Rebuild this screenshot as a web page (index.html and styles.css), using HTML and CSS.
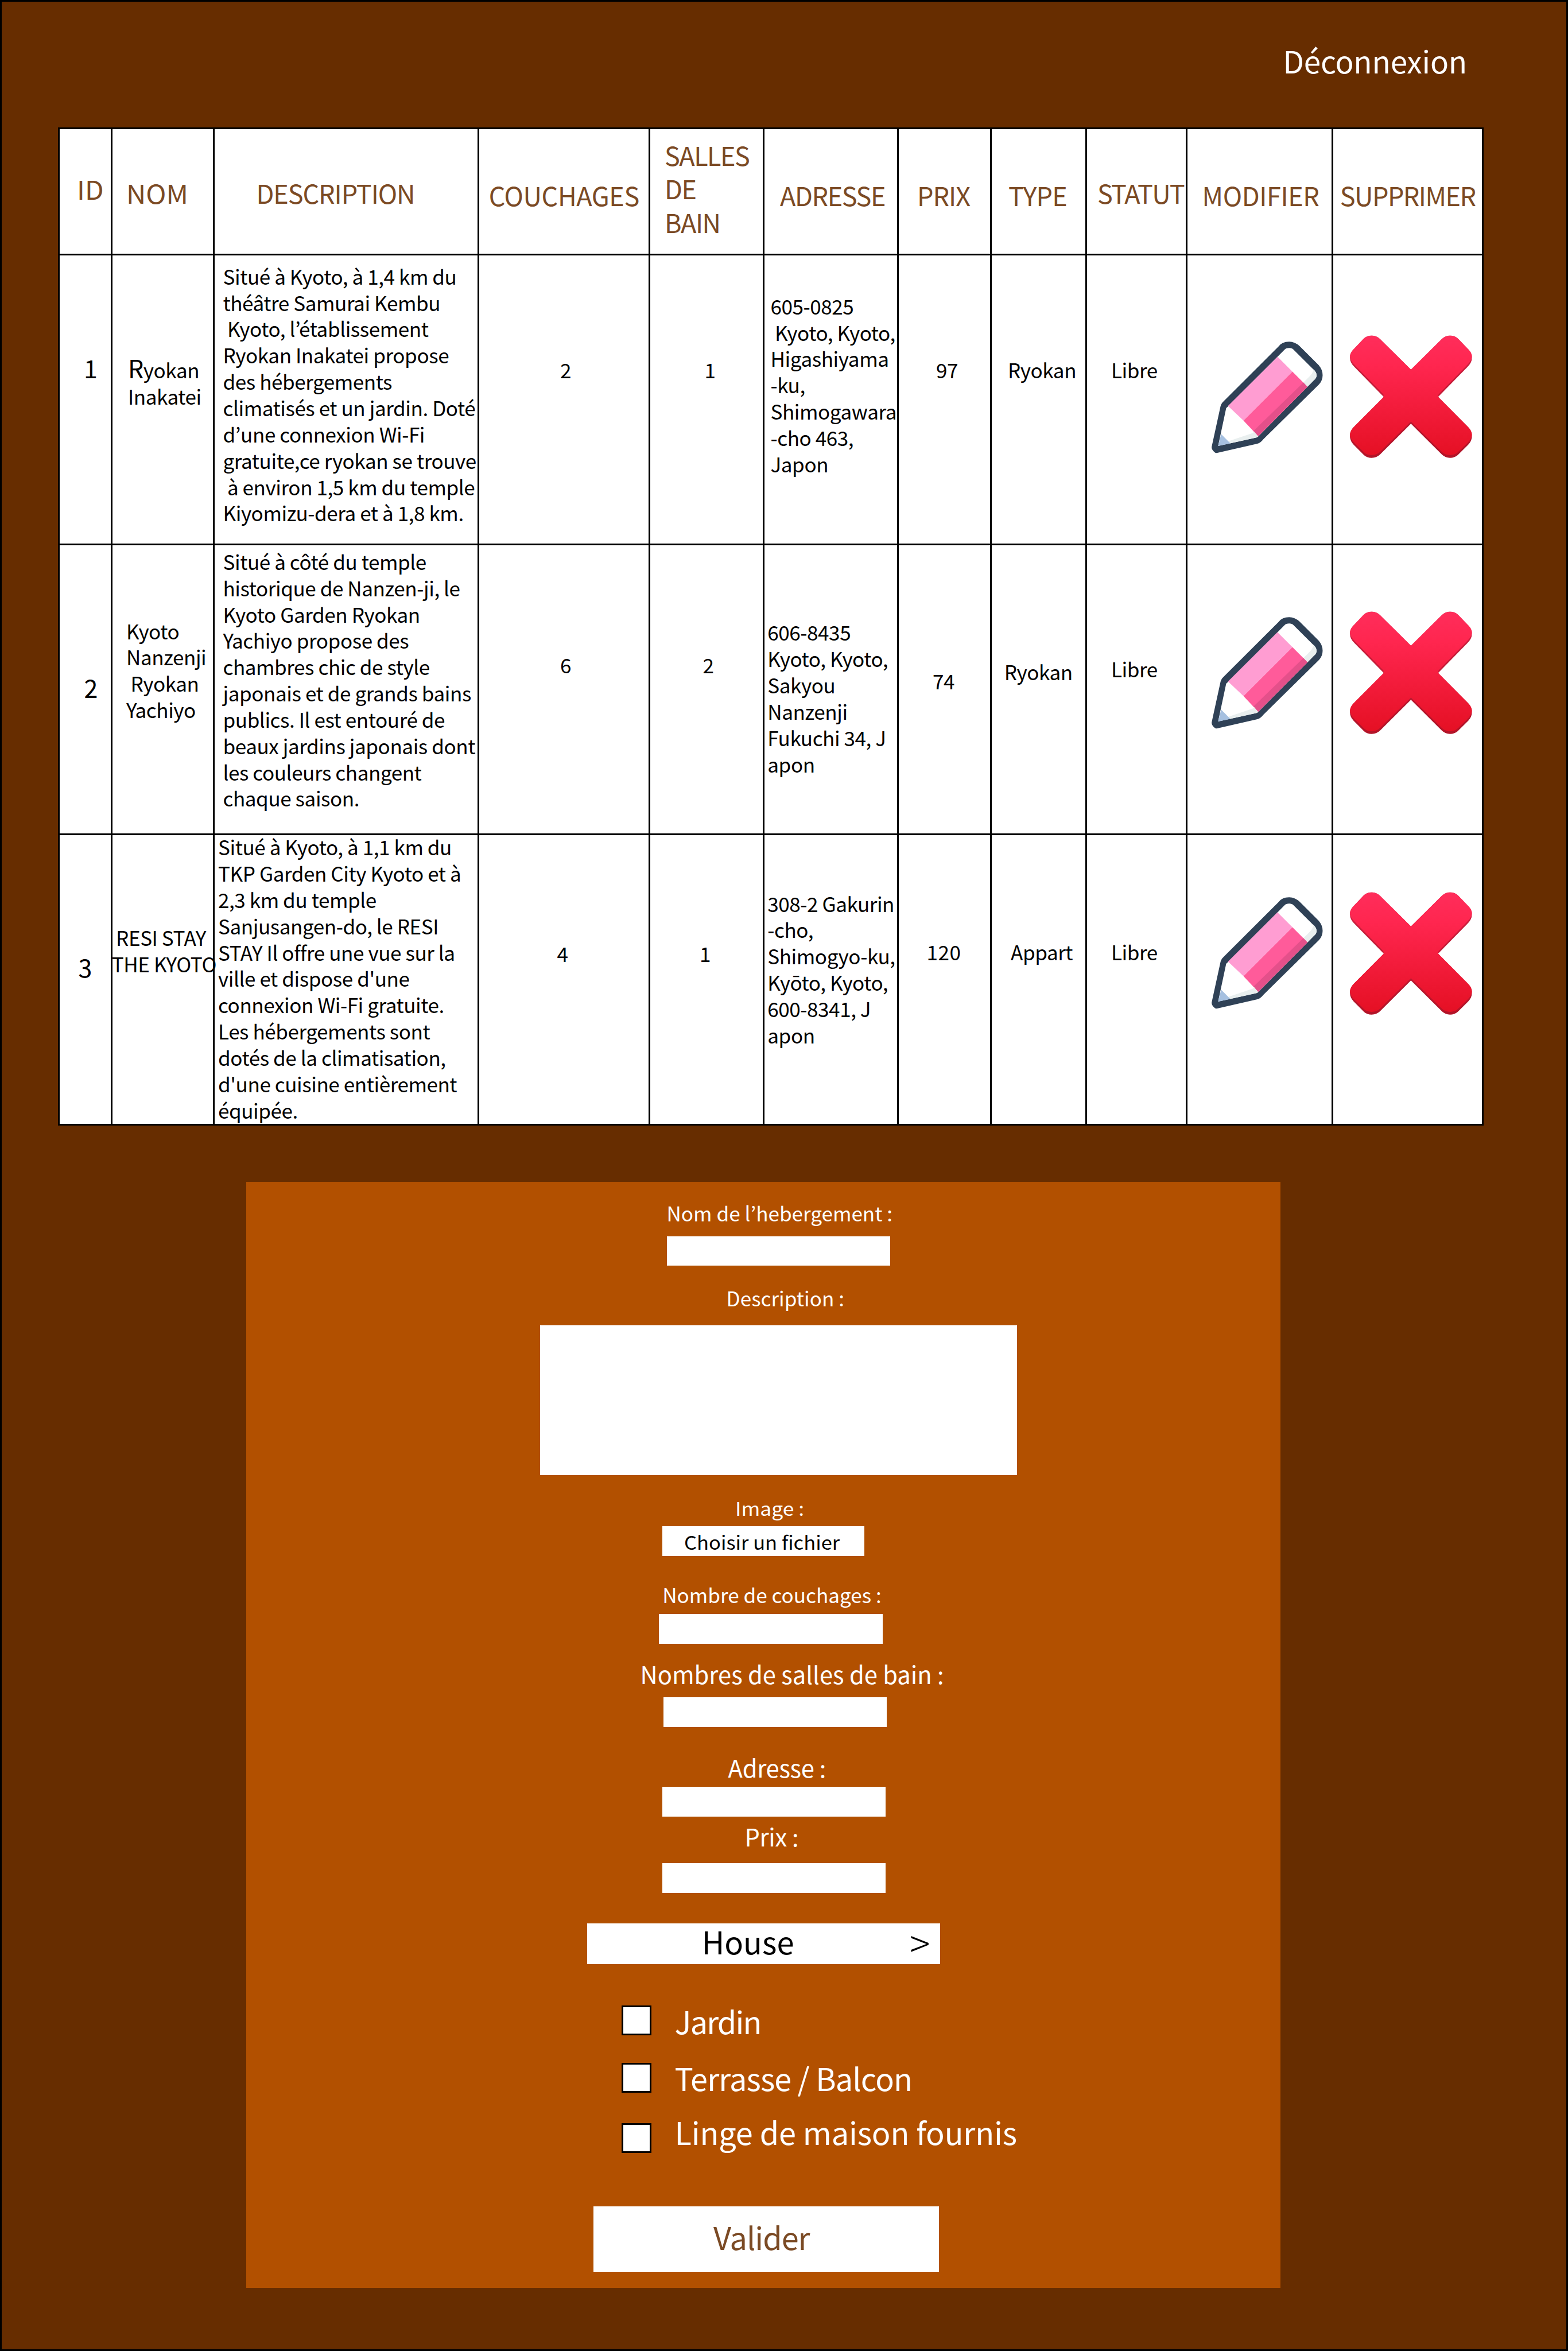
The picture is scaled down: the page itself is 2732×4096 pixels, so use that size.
FILE: index.html
```html
<!DOCTYPE html>
<html lang="fr">
<head>
<meta charset="utf-8">
<title>Administration des hébergements</title>
<link rel="stylesheet" href="styles.css">
</head>
<body>
<svg class="sprite" aria-hidden="true">
  <defs>
    <linearGradient id="face" x1="0" y1="0" x2="0" y2="1">
      <stop offset="0" stop-color="#ff2d5b"/>
      <stop offset="0.25" stop-color="#ff264f"/>
      <stop offset="1" stop-color="#e51024"/>
    </linearGradient>
    <linearGradient id="edge" x1="0" y1="0" x2="0" y2="1">
      <stop offset="0" stop-color="#d32345"/>
      <stop offset="1" stop-color="#b21428"/>
    </linearGradient>
  </defs>
  <symbol id="pencil" viewBox="110 165 570 910" preserveAspectRatio="none">
    <path fill="#2f4156" d="M165 680Q168 665 180 648L450 215Q467 175 504 175Q532 175 555 210L650 362Q670 398 670 443Q670 485 652 517L375 955Q362 985 340 992L150 1062Q138 1068 130 1052Q118 1035 119 1015L163 690Z"/>
    <path fill="#fff" d="M191 705L203 688L480 240Q488 226 504 226Q518 226 525 238L625 398Q640 420 640 445Q640 465 627 482L350 932Q345 940 335 943L151 1008Z"/>
    <path fill="#ff9dd2" d="M446 295L520 415L277 805L200 688Z"/>
    <path fill="#ff5b9a" d="M520 415L595 535L350 930L277 805Z"/>
    <path fill="#e4508a" d="M575 500L595 535L350 930L327 888Z"/>
    <path fill="#e9efef" d="M625 398Q640 420 640 445Q640 465 627 482L595 535L575 500L608 448Q620 428 625 398Z"/>
    <path fill="#e9efef" d="M202 970L325 903L330 893L350 932Q345 940 335 943L210 987Z"/>
    <path fill="#a6c0e0" d="M166 913L212 987L151 1008Z"/>
  </symbol>
  <symbol id="cross" viewBox="800 125 612 982" preserveAspectRatio="none">
    <path fill="url(#edge)" d="M870 155Q885 128 911 128Q935 128 952 155L1106 400L1260 155Q1277 128 1300 128Q1326 128 1341 155L1385 228Q1409 262 1409 305Q1409 345 1385 382L1241 617L1385 850Q1409 885 1409 930Q1409 968 1390 1000L1338 1082Q1322 1104 1300 1104Q1277 1104 1260 1078L1106 832L952 1078Q935 1104 911 1104Q888 1104 873 1082L822 1000Q803 968 803 930Q803 885 827 850L971 617L827 382Q803 345 803 305Q803 262 827 228Z"/>
    <path fill="url(#face)" d="M870 155Q885 128 911 128Q935 128 952 155L1106 400L1260 155Q1277 128 1300 128Q1326 128 1341 155L1385 228Q1409 262 1409 295Q1407 330 1385 363L1243 597L1241 617L1385 850Q1409 885 1409 920Q1406 955 1388 983L1337 1062Q1322 1082 1300 1082Q1277 1082 1260 1057L1106 813L952 1057Q935 1082 911 1082Q888 1082 874 1062L824 983Q806 955 803 920Q803 885 827 850L971 617L969 597L827 363Q805 330 803 295Q803 262 827 228Z"/>
  </symbol>
</svg>
<div class="page">
  <header class="topbar"><a class="logout">Déconnexion</a></header>

  <div class="table">
    <div class="row head">
      <div class="cell id"><span class="stretch">ID</span></div>
      <div class="cell name"><span class="stretch">NOM</span></div>
      <div class="cell desc">DESCRIPTION</div>
      <div class="cell beds">COUCHAGES</div>
      <div class="cell baths">SALLES<br>DE<br>BAIN</div>
      <div class="cell addr">ADRESSE</div>
      <div class="cell price">PRIX</div>
      <div class="cell type">TYPE</div>
      <div class="cell status">STATUT</div>
      <div class="cell edit">MODIFIER</div>
      <div class="cell remove">SUPPRIMER</div>
    </div>
    <div class="row first">
      <div class="cell id">1</div>
      <div class="cell name"><p>Ryokan</p><p>Inakatei</p></div>
      <div class="cell desc">Situé à Kyoto, à 1,4 km du
théâtre Samurai Kembu
 Kyoto, l’établissement
Ryokan Inakatei propose
des hébergements
climatisés et un jardin. Doté
d’une connexion Wi-Fi
gratuite,ce ryokan se trouve
 à environ 1,5 km du temple
Kiyomizu-dera et à 1,8 km.</div>
      <div class="cell beds">2</div>
      <div class="cell baths">1</div>
      <div class="cell addr">605-0825
 Kyoto, Kyoto,
Higashiyama
-ku,
Shimogawara
-cho 463,
Japon</div>
      <div class="cell price">97</div>
      <div class="cell type">Ryokan</div>
      <div class="cell status">Libre</div>
      <div class="cell edit"><svg class="pencil"><use href="#pencil"/></svg></div>
      <div class="cell remove"><svg class="cross"><use href="#cross"/></svg></div>
    </div>
    <div class="row second">
      <div class="cell id">2</div>
      <div class="cell name">Kyoto
Nanzenji
 Ryokan
Yachiyo</div>
      <div class="cell desc">Situé à côté du temple
historique de Nanzen-ji, le
Kyoto Garden Ryokan
Yachiyo propose des
chambres chic de style
japonais et de grands bains
publics. Il est entouré de
beaux jardins japonais dont
les couleurs changent
chaque saison.</div>
      <div class="cell beds">6</div>
      <div class="cell baths">2</div>
      <div class="cell addr">606-8435
Kyoto, Kyoto,
Sakyou
Nanzenji
Fukuchi 34, J
apon</div>
      <div class="cell price">74</div>
      <div class="cell type">Ryokan</div>
      <div class="cell status">Libre</div>
      <div class="cell edit"><svg class="pencil"><use href="#pencil"/></svg></div>
      <div class="cell remove"><svg class="cross"><use href="#cross"/></svg></div>
    </div>
    <div class="row third">
      <div class="cell id">3</div>
      <div class="cell name"><p class="wide"> RESI STAY
THE KYOTO</p></div>
      <div class="cell desc"><p class="tall">Situé à Kyoto, à 1,1 km du
TKP Garden City Kyoto et à
2,3 km du temple
Sanjusangen-do, le RESI
STAY Il offre une vue sur la
ville et dispose d'une
connexion Wi-Fi gratuite.
Les hébergements sont
dotés de la climatisation,
d'une cuisine entièrement
équipée.</p></div>
      <div class="cell beds">4</div>
      <div class="cell baths">1</div>
      <div class="cell addr">308-2 Gakurin
-cho,
Shimogyo-ku,
Kyōto, Kyoto,
600-8341, J
apon</div>
      <div class="cell price">120</div>
      <div class="cell type">Appart</div>
      <div class="cell status">Libre</div>
      <div class="cell edit"><svg class="pencil"><use href="#pencil"/></svg></div>
      <div class="cell remove"><svg class="cross"><use href="#cross"/></svg></div>
    </div>
  </div>

  <form class="form">
    <label class="label l-name">Nom de l’hebergement :</label>
    <div class="field f-name"></div>
    <label class="label l-desc">Description :</label>
    <div class="field f-desc"></div>
    <label class="label l-image">Image :</label>
    <div class="file"><span class="file-text">Choisir un fichier</span></div>
    <label class="label l-beds">Nombre de couchages :</label>
    <div class="field f-beds"></div>
    <label class="label large l-baths">Nombres de salles de bain :</label>
    <div class="field f-baths"></div>
    <label class="label large l-addr">Adresse :</label>
    <div class="field f-addr"></div>
    <label class="label large l-price">Prix :</label>
    <div class="field f-price"></div>
    <div class="select"><span>House</span><span class="arrow">&gt;</span></div>
    <div class="check garden"><span class="box"></span><span class="check-text">Jardin</span></div>
    <div class="check terrace"><span class="box"></span><span class="check-text">Terrasse / Balcon</span></div>
    <div class="check linen"><span class="box"></span><span class="check-text">Linge de maison fournis</span></div>
    <div class="submit">Valider</div>
  </form>
</div>
</body>
</html>
```
FILE: styles.css
```css
* { box-sizing: border-box; }
body {
  margin: 0;
  font-family: "Noto Sans CJK JP", "Noto Sans", sans-serif;
  color: #000;
}
.sprite { display: block; width: 0; height: 0; }
.page {
  width: 2732px;
  height: 4096px;
  border: 3px solid #000;
  background: #672d00;
  overflow: hidden;
}
.topbar {
  display: flex;
  justify-content: flex-end;
  height: 219px;
  padding: 69.7px 173px 0 0;
}
.logout { color: #fff; font-size: 53px; line-height: 64px; letter-spacing: -0.2px; }

/* Table: the black background shows through the gaps as grid lines */
.table {
  display: grid;
  grid-template-rows: 217px 502px 502px 503px;
  gap: 3px;
  width: 2484px;
  margin-left: 98px;
  padding: 3px;
  background: #000;
}
.row {
  display: grid;
  grid-template-columns: 89px 175px 458px 295px 196px 231px 159px 163px 172px 251px 259px;
  gap: 3px;
}
.cell {
  border: solid #fff;
  border-width: 1px 0 0 1px;
  background: #fff;
  font-size: 35.1px;
  line-height: 45.85px;
  letter-spacing: -0.45px;
  white-space: pre;
}
.cell p { margin: 0; }

.head .cell {
  padding-top: 84.5px;
  color: #7b4a24;
  font-size: 45px;
  line-height: 58.6px;
  white-space: nowrap;
}
.stretch {
  display: block;
  width: max-content;
  transform: scaleX(1.055);
  transform-origin: left;
}
.head .id { padding: 74.3px 0 0 29.4px; letter-spacing: 0; }
.head .name { padding: 80.7px 0 0 22.5px; letter-spacing: 0; }
.head .desc { padding: 80.7px 0 0 71.5px; letter-spacing: -1.1px; }
.head .beds { padding-left: 15.7px; letter-spacing: -0.4px; }
.head .baths { padding: 14.8px 0 0 24px; letter-spacing: -1.5px; }
.head .addr { padding-left: 26px; letter-spacing: -1.4px; }
.head .price { padding-left: 31px; letter-spacing: -1px; }
.head .type { padding-left: 28px; letter-spacing: -0.8px; }
.head .status { padding: 80.7px 0 0 17px; letter-spacing: -1.8px; }
.head .edit { padding-left: 24.5px; letter-spacing: -0.4px; }
.head .remove { padding-left: 10.8px; letter-spacing: -1.55px; }

.row:not(.head) .id { font-size: 43px; }
.pencil { display: block; width: 200px; height: 198.7px; margin: -1px 0 0 -1px; }
.cross { display: block; width: 214.7px; height: 214.4px; margin: -1px 0 0 -1px; }

.first .cell { padding-top: 175.3px; }
.first .id { padding: 171.9px 0 0 41px; }
.first .name { padding-left: 26px; }
.first .name p:first-child::first-letter { font-size: 43px; line-height: 0; }
.first .desc { padding: 11.8px 0 0 13.5px; }
.first .beds { padding-left: 140px; }
.first .baths { padding-left: 93.5px; }
.first .addr { padding: 63.8px 0 0 9.5px; }
.first .price { padding-left: 64px; }
.first .type { padding-left: 27px; }
.first .status { padding-left: 41px; }
.first .edit { padding: 147.8px 0 0 39.4px; }
.first .remove { padding: 139px 0 0 27.5px; }

.second .cell { padding-top: 183.8px; }
.second .id { padding: 223.8px 0 0 41.4px; }
.second .name { padding: 124.5px 0 0 23px; }
.second .desc { padding: 3.9px 0 0 13.5px; }
.second .beds { padding-left: 140px; }
.second .baths { padding-left: 90.5px; }
.second .addr { padding: 127.3px 0 0 4.3px; }
.second .price { padding: 212.1px 0 0 58px; }
.second .type { padding: 195.5px 0 0 20.7px; }
.second .status { padding: 191.4px 0 0 41px; }
.second .edit { padding: 122.6px 0 0 39.4px; }
.second .remove { padding: 115.2px 0 0 27.5px; }

.third .cell { padding-top: 178.5px; }
.third .id { padding: 206.2px 0 0 31.5px; }
.third .name { padding: 154.4px 0 0; }
.third .wide { position: relative; z-index: 1; margin-left: -2.3px; }
.third .desc { padding: 0 0 0 5px; }
.third .tall { margin-top: -3.8px; }
.third .beds { padding: 182px 0 0 134.5px; }
.third .baths { padding: 182px 0 0 85px; }
.third .addr { padding: 94.5px 0 0 4.3px; }
.third .price { padding-left: 47.5px; letter-spacing: 0.5px; }
.third .type { padding-left: 32px; }
.third .status { padding-left: 41px; }
.third .edit { padding: 106.3px 0 0 39.4px; }
.third .remove { padding: 98.9px 0 0 27.5px; }

/* Form */
.form {
  display: flex;
  flex-direction: column;
  align-items: flex-start;
  width: 1801.4px;
  height: 1926.6px;
  margin: 98.2px 0 0 426.3px;
  background: #b25000;
}
.label {
  flex: none;
  padding-left: 1px;
  color: #fff;
  font-size: 35.1px;
  line-height: 42px;
  white-space: nowrap;
}
.label.large { font-size: 41.7px; line-height: 50px; }
.field { flex: none; width: 388.5px; height: 51.8px; background: #fff; }

.l-name { margin: 32.9px 0 0 731.2px; }
.f-name { margin: 19.9px 0 0 732.9px; height: 51.5px; }
.l-desc { margin: 34.3px 0 0 835.3px; }
.f-desc { margin: 27px 0 0 511.3px; width: 831px; height: 261px; }
.label.l-image {
  margin: 37.5px 0 0 851.1px;
  font-size: 32.5px;
  line-height: 40px;
  transform: scaleX(1.09);
  transform-origin: left;
}
.file {
  flex: none;
  width: 351.9px;
  height: 51.9px;
  margin: 11.9px 0 0 725.1px;
  padding: 6.7px 0 0 37.6px;
  background: #fff;
}
.file-text {
  display: block;
  width: max-content;
  font-size: 32.5px;
  line-height: 40px;
  transform: scaleX(1.062);
  transform-origin: left;
}
.l-beds { margin: 45.7px 0 0 723.9px; }
.f-beds { margin: 13.5px 0 0 719px; width: 389.5px; }
.l-baths { margin: 27.1px 0 0 685.3px; }
.f-baths { margin: 16px 0 0 726.9px; }
.l-addr { margin: 45.5px 0 0 838.3px; letter-spacing: -0.3px; }
.f-addr { margin: 8.9px 0 0 725.1px; height: 52px; }
.l-price { margin: 9px 0 0 867.1px; letter-spacing: -0.3px; }
.f-price { margin: 22px 0 0 725.1px; height: 51.6px; }
.select {
  flex: none;
  display: flex;
  justify-content: space-between;
  width: 614.9px;
  height: 70.7px;
  margin: 53.3px 0 0 593.6px;
  padding: 0 17.5px 0 199.8px;
  background: #fff;
  font-size: 54.3px;
  line-height: 62px;
}
.arrow { font-size: 66px; font-weight: 300; }
.check {
  flex: none;
  display: flex;
  align-items: flex-start;
  gap: 41px;
  height: 64px;
  margin-left: 653.3px;
  color: #fff;
  font-size: 54px;
  line-height: 64px;
  white-space: nowrap;
}
.box {
  flex: none;
  width: 52px;
  height: 52px;
  border: 3px solid #000;
  background: #fff;
}
.garden { margin-top: 67.5px; }
.garden .box { margin-top: 4.8px; }
.garden .check-text { letter-spacing: -1.8px; }
.terrace { margin-top: 35.1px; }
.terrace .box { margin-top: 5.7px; }
.terrace .check-text { letter-spacing: -0.85px; }
.linen { margin-top: 29.8px; }
.linen .box { margin-top: 17.2px; }
.linen .check-text { letter-spacing: -0.12px; }
.submit {
  flex: none;
  width: 602.1px;
  height: 113.9px;
  margin: 97.4px 0 0 605.1px;
  padding: 20.9px 0 0 208.5px;
  background: #fff;
  color: #7b4a24;
  font-size: 54px;
  line-height: 64px;
  letter-spacing: -1px;
}
```
